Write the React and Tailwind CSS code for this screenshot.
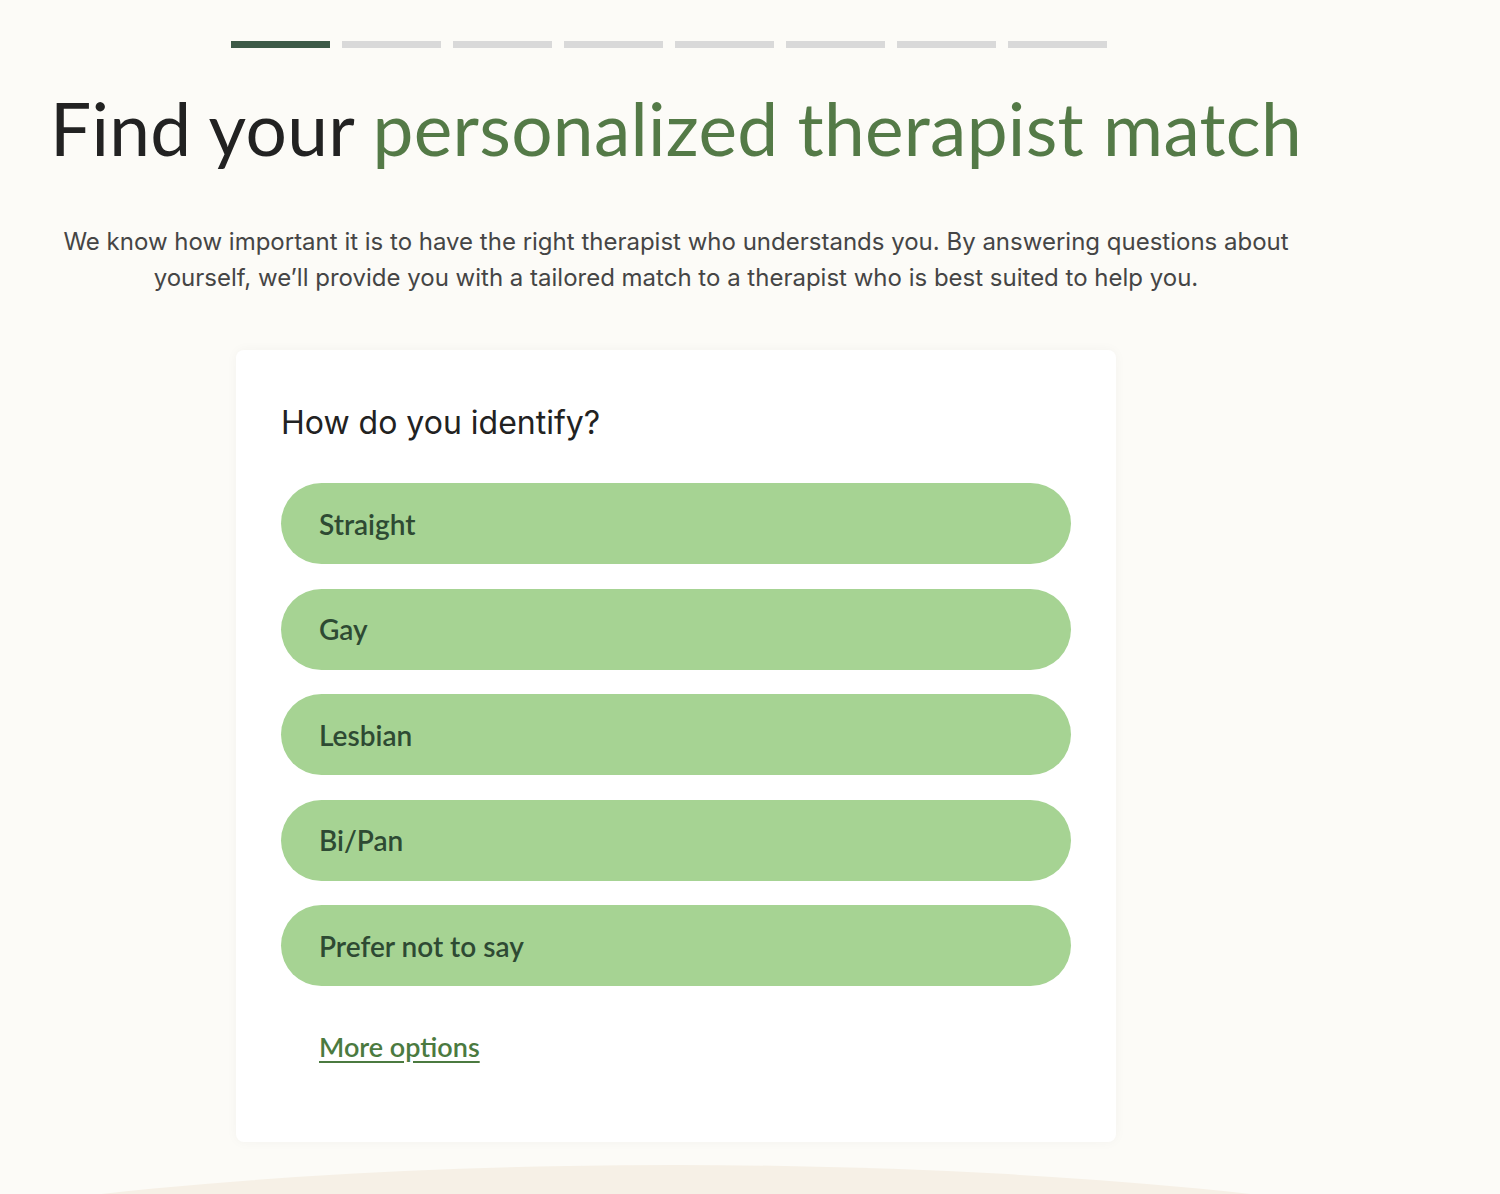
import React from "react";

const options = ["Straight", "Gay", "Lesbian", "Bi/Pan", "Prefer not to say"];

const App = () => (
  <div className="min-h-[1194px] h-[1194px] overflow-hidden bg-[#fcfbf7] relative">
    <div className="w-[1352px] flex flex-col items-center">
      {/* Progress */}
      <div className="flex gap-[12px] mt-[41px] mr-[14px]">
        {Array.from({ length: 8 }).map((_, i) => (
          <div key={i} className={i === 0 ? "w-[99px] h-[7px] bg-[#3d5a47]" : "w-[99px] h-[7px] bg-[#d9d9d9]"} />
        ))}
      </div>

      <h1
        className="mt-[32px] text-[73px] leading-[96px] text-[#222222] tracking-[0.3px] whitespace-nowrap"
        style={{ fontFamily: "Lato, 'Open Sans', sans-serif" }}
      >
        Find your <span className="text-[#547a47]">personalized therapist match</span>
      </h1>

      <p
        className="mt-[48px] w-[1250px] text-center text-[24px] leading-[36px] text-[#454545]"
        style={{ fontFamily: "Inter, sans-serif" }}
      >
        We know how important it is to have the right therapist who understands you. By answering questions about yourself, we’ll provide you with a tailored match to a therapist who is best suited to help you.
      </p>

      {/* Card */}
      <div className="mt-[54px] w-[880px] bg-white rounded-[8px] shadow-[0_0_12px_rgba(0,0,0,0.04)] px-[45px] pt-[54px] pb-[74px] relative z-10">
        <h2 className="text-[32px] leading-[38px] text-[#222222]" style={{ fontFamily: "Inter, sans-serif" }}>
          How do you identify?
        </h2>
        <div className="mt-[41px] flex flex-col gap-[24.5px]">
          {options.map((o) => (
            <button
              key={o}
              className="h-[81px] w-full rounded-full bg-[#a6d393] text-left pl-[38px] text-[28px] font-semibold text-[#2e4a33]"
              style={{ fontFamily: "Lato, sans-serif" }}
            >
              {o}
            </button>
          ))}
        </div>
        <a
          href="#"
          className="block mt-[41px] ml-[38px] text-[27px] font-semibold text-[#4b7a40] underline underline-offset-4"
          style={{ fontFamily: "Lato, sans-serif" }}
        >
          More options
        </a>
      </div>
    </div>
    <div className="absolute left-[-432px] w-[2216px] top-[1165px] h-[400px] rounded-[50%] bg-[#f6f0e6]" />
  </div>
);

export default App;
